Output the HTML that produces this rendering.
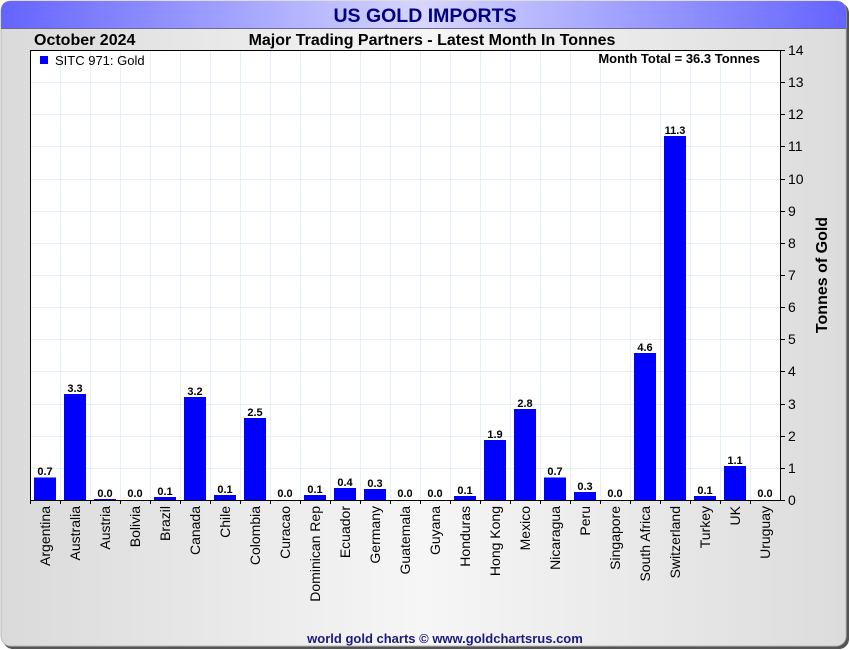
<!DOCTYPE html>
<html><head><meta charset="utf-8"><style>
html,body{margin:0;padding:0;width:850px;height:650px;overflow:hidden;background:#fff;}
svg{display:block;font-family:"Liberation Sans",Arial,sans-serif;}
</style></head><body>
<svg width="850" height="650" viewBox="0 0 850 650" xmlns="http://www.w3.org/2000/svg">
<defs>
<linearGradient id="hd" x1="0" x2="1" y1="0" y2="0">
<stop offset="0" stop-color="#6464ff"/><stop offset="0.5" stop-color="#d6d6ff"/><stop offset="1" stop-color="#6464ff"/>
</linearGradient>
<linearGradient id="bg" x1="0" x2="1" y1="0" y2="0">
<stop offset="0" stop-color="#dadada"/><stop offset="0.5" stop-color="#f6f6f6"/><stop offset="1" stop-color="#dcdcdc"/>
</linearGradient>
</defs>
<rect x="0" y="0" width="850" height="650" fill="#fff"/>
<rect x="3" y="3" width="846" height="646" rx="10" fill="#555"/>
<rect x="1" y="1" width="845" height="645" rx="10" fill="url(#bg)" stroke="#bbb" stroke-width="1"/>
<path d="M1,28 L1,11 Q1,1 11,1 L836,1 Q846,1 846,11 L846,28 Z" fill="url(#hd)"/>
<line x1="1" y1="28.5" x2="846" y2="28.5" stroke="#6a6a9a" stroke-width="1"/>
<text x="425" y="22" text-anchor="middle" font-size="19.5" font-weight="bold" fill="#000080">US GOLD IMPORTS</text>
<text x="34" y="45" font-size="16" font-weight="bold" fill="#000">October 2024</text>
<text x="432" y="45" text-anchor="middle" font-size="16" font-weight="bold" fill="#000">Major Trading Partners - Latest Month In Tonnes</text>
<rect x="30.5" y="50.5" width="750" height="450" fill="#fff" stroke="#000" stroke-width="1"/>
<g stroke="#e3eff9" stroke-width="1">
<line x1="60.5" y1="51" x2="60.5" y2="500"/><line x1="90.5" y1="51" x2="90.5" y2="500"/><line x1="120.5" y1="51" x2="120.5" y2="500"/><line x1="150.5" y1="51" x2="150.5" y2="500"/><line x1="180.5" y1="51" x2="180.5" y2="500"/><line x1="210.5" y1="51" x2="210.5" y2="500"/><line x1="240.5" y1="51" x2="240.5" y2="500"/><line x1="270.5" y1="51" x2="270.5" y2="500"/><line x1="300.5" y1="51" x2="300.5" y2="500"/><line x1="330.5" y1="51" x2="330.5" y2="500"/><line x1="360.5" y1="51" x2="360.5" y2="500"/><line x1="390.5" y1="51" x2="390.5" y2="500"/><line x1="420.5" y1="51" x2="420.5" y2="500"/><line x1="450.5" y1="51" x2="450.5" y2="500"/><line x1="480.5" y1="51" x2="480.5" y2="500"/><line x1="510.5" y1="51" x2="510.5" y2="500"/><line x1="540.5" y1="51" x2="540.5" y2="500"/><line x1="570.5" y1="51" x2="570.5" y2="500"/><line x1="600.5" y1="51" x2="600.5" y2="500"/><line x1="630.5" y1="51" x2="630.5" y2="500"/><line x1="660.5" y1="51" x2="660.5" y2="500"/><line x1="690.5" y1="51" x2="690.5" y2="500"/><line x1="720.5" y1="51" x2="720.5" y2="500"/><line x1="750.5" y1="51" x2="750.5" y2="500"/>
<line x1="31" y1="82.5" x2="780" y2="82.5"/><line x1="31" y1="114.5" x2="780" y2="114.5"/><line x1="31" y1="146.5" x2="780" y2="146.5"/><line x1="31" y1="179.5" x2="780" y2="179.5"/><line x1="31" y1="211.5" x2="780" y2="211.5"/><line x1="31" y1="243.5" x2="780" y2="243.5"/><line x1="31" y1="275.5" x2="780" y2="275.5"/><line x1="31" y1="307.5" x2="780" y2="307.5"/><line x1="31" y1="339.5" x2="780" y2="339.5"/><line x1="31" y1="371.5" x2="780" y2="371.5"/><line x1="31" y1="404.5" x2="780" y2="404.5"/><line x1="31" y1="436.5" x2="780" y2="436.5"/><line x1="31" y1="468.5" x2="780" y2="468.5"/>
</g>
<rect x="40" y="56" width="8" height="8" fill="#0000ff"/>
<text x="55" y="65" font-size="13" fill="#000">SITC 971: Gold</text>
<text x="760" y="63" text-anchor="end" font-size="13" font-weight="bold" fill="#000">Month Total = 36.3 Tonnes</text>
<g fill="#0000ff">
<rect x="34" y="477.5" width="22" height="22.5"/>
<rect x="64" y="394" width="22" height="106"/>
<rect x="94" y="499" width="22" height="1"/>
<rect x="154" y="497" width="22" height="3"/>
<rect x="184" y="397" width="22" height="103"/>
<rect x="214" y="495" width="22" height="5"/>
<rect x="244" y="418" width="22" height="82"/>
<rect x="304" y="495" width="22" height="5"/>
<rect x="334" y="488" width="22" height="12"/>
<rect x="364" y="489" width="22" height="11"/>
<rect x="454" y="496" width="22" height="4"/>
<rect x="484" y="440" width="22" height="60"/>
<rect x="514" y="409" width="22" height="91"/>
<rect x="544" y="477.5" width="22" height="22.5"/>
<rect x="574" y="492" width="22" height="8"/>
<rect x="634" y="353" width="22" height="147"/>
<rect x="664" y="136" width="22" height="364"/>
<rect x="694" y="496" width="22" height="4"/>
<rect x="724" y="466" width="22" height="34"/>
</g>
<g font-size="11" font-weight="bold" fill="#000" text-anchor="middle">
<text x="45" y="475">0.7</text><text x="75" y="392">3.3</text><text x="105" y="497">0.0</text><text x="135" y="497">0.0</text><text x="165" y="495">0.1</text><text x="195" y="395">3.2</text><text x="225" y="493">0.1</text><text x="255" y="416">2.5</text><text x="285" y="497">0.0</text><text x="315" y="493">0.1</text><text x="345" y="486">0.4</text><text x="375" y="487">0.3</text><text x="405" y="497">0.0</text><text x="435" y="497">0.0</text><text x="465" y="494">0.1</text><text x="495" y="438">1.9</text><text x="525" y="407">2.8</text><text x="555" y="475">0.7</text><text x="585" y="490">0.3</text><text x="615" y="497">0.0</text><text x="645" y="351">4.6</text><text x="675" y="134">11.3</text><text x="705" y="494">0.1</text><text x="735" y="464">1.1</text><text x="765" y="497">0.0</text>
</g>
<g stroke="#000" stroke-width="1">
<line x1="30.5" y1="500" x2="30.5" y2="504"/><line x1="60.5" y1="500" x2="60.5" y2="504"/><line x1="90.5" y1="500" x2="90.5" y2="504"/><line x1="120.5" y1="500" x2="120.5" y2="504"/><line x1="150.5" y1="500" x2="150.5" y2="504"/><line x1="180.5" y1="500" x2="180.5" y2="504"/><line x1="210.5" y1="500" x2="210.5" y2="504"/><line x1="240.5" y1="500" x2="240.5" y2="504"/><line x1="270.5" y1="500" x2="270.5" y2="504"/><line x1="300.5" y1="500" x2="300.5" y2="504"/><line x1="330.5" y1="500" x2="330.5" y2="504"/><line x1="360.5" y1="500" x2="360.5" y2="504"/><line x1="390.5" y1="500" x2="390.5" y2="504"/><line x1="420.5" y1="500" x2="420.5" y2="504"/><line x1="450.5" y1="500" x2="450.5" y2="504"/><line x1="480.5" y1="500" x2="480.5" y2="504"/><line x1="510.5" y1="500" x2="510.5" y2="504"/><line x1="540.5" y1="500" x2="540.5" y2="504"/><line x1="570.5" y1="500" x2="570.5" y2="504"/><line x1="600.5" y1="500" x2="600.5" y2="504"/><line x1="630.5" y1="500" x2="630.5" y2="504"/><line x1="660.5" y1="500" x2="660.5" y2="504"/><line x1="690.5" y1="500" x2="690.5" y2="504"/><line x1="720.5" y1="500" x2="720.5" y2="504"/><line x1="750.5" y1="500" x2="750.5" y2="504"/>
<line x1="780" y1="50.5" x2="785" y2="50.5"/><line x1="780" y1="82.5" x2="785" y2="82.5"/><line x1="780" y1="114.5" x2="785" y2="114.5"/><line x1="780" y1="146.5" x2="785" y2="146.5"/><line x1="780" y1="179.5" x2="785" y2="179.5"/><line x1="780" y1="211.5" x2="785" y2="211.5"/><line x1="780" y1="243.5" x2="785" y2="243.5"/><line x1="780" y1="275.5" x2="785" y2="275.5"/><line x1="780" y1="307.5" x2="785" y2="307.5"/><line x1="780" y1="339.5" x2="785" y2="339.5"/><line x1="780" y1="371.5" x2="785" y2="371.5"/><line x1="780" y1="404.5" x2="785" y2="404.5"/><line x1="780" y1="436.5" x2="785" y2="436.5"/><line x1="780" y1="468.5" x2="785" y2="468.5"/><line x1="780" y1="500.5" x2="785" y2="500.5"/>
</g>
<g font-size="14" fill="#000">
<text x="788" y="55">14</text><text x="788" y="87">13</text><text x="788" y="119">12</text><text x="788" y="151">11</text><text x="788" y="184">10</text><text x="788" y="216">9</text><text x="788" y="248">8</text><text x="788" y="280">7</text><text x="788" y="312">6</text><text x="788" y="344">5</text><text x="788" y="376">4</text><text x="788" y="409">3</text><text x="788" y="441">2</text><text x="788" y="473">1</text><text x="788" y="505">0</text>
</g>
<text transform="translate(827,275) rotate(-90)" text-anchor="middle" font-size="16" font-weight="bold" fill="#000">Tonnes of Gold</text>
<g font-size="14" fill="#000" text-anchor="end">
<text transform="translate(50,506) rotate(-90)">Argentina</text>
<text transform="translate(80,506) rotate(-90)">Australia</text>
<text transform="translate(110,506) rotate(-90)">Austria</text>
<text transform="translate(140,506) rotate(-90)">Bolivia</text>
<text transform="translate(170,506) rotate(-90)">Brazil</text>
<text transform="translate(200,506) rotate(-90)">Canada</text>
<text transform="translate(230,506) rotate(-90)">Chile</text>
<text transform="translate(260,506) rotate(-90)">Colombia</text>
<text transform="translate(290,506) rotate(-90)">Curacao</text>
<text transform="translate(320,506) rotate(-90)">Dominican Rep</text>
<text transform="translate(350,506) rotate(-90)">Ecuador</text>
<text transform="translate(380,506) rotate(-90)">Germany</text>
<text transform="translate(410,506) rotate(-90)">Guatemala</text>
<text transform="translate(440,506) rotate(-90)">Guyana</text>
<text transform="translate(470,506) rotate(-90)">Honduras</text>
<text transform="translate(500,506) rotate(-90)">Hong Kong</text>
<text transform="translate(530,506) rotate(-90)">Mexico</text>
<text transform="translate(560,506) rotate(-90)">Nicaragua</text>
<text transform="translate(590,506) rotate(-90)">Peru</text>
<text transform="translate(620,506) rotate(-90)">Singapore</text>
<text transform="translate(650,506) rotate(-90)">South Africa</text>
<text transform="translate(680,506) rotate(-90)">Switzerland</text>
<text transform="translate(710,506) rotate(-90)">Turkey</text>
<text transform="translate(740,506) rotate(-90)">UK</text>
<text transform="translate(770,506) rotate(-90)">Uruguay</text>
</g>
<text x="445" y="643" text-anchor="middle" font-size="13" font-weight="bold" fill="#1a1a80">world gold charts © www.goldchartsrus.com</text>
</svg>
</body></html>
